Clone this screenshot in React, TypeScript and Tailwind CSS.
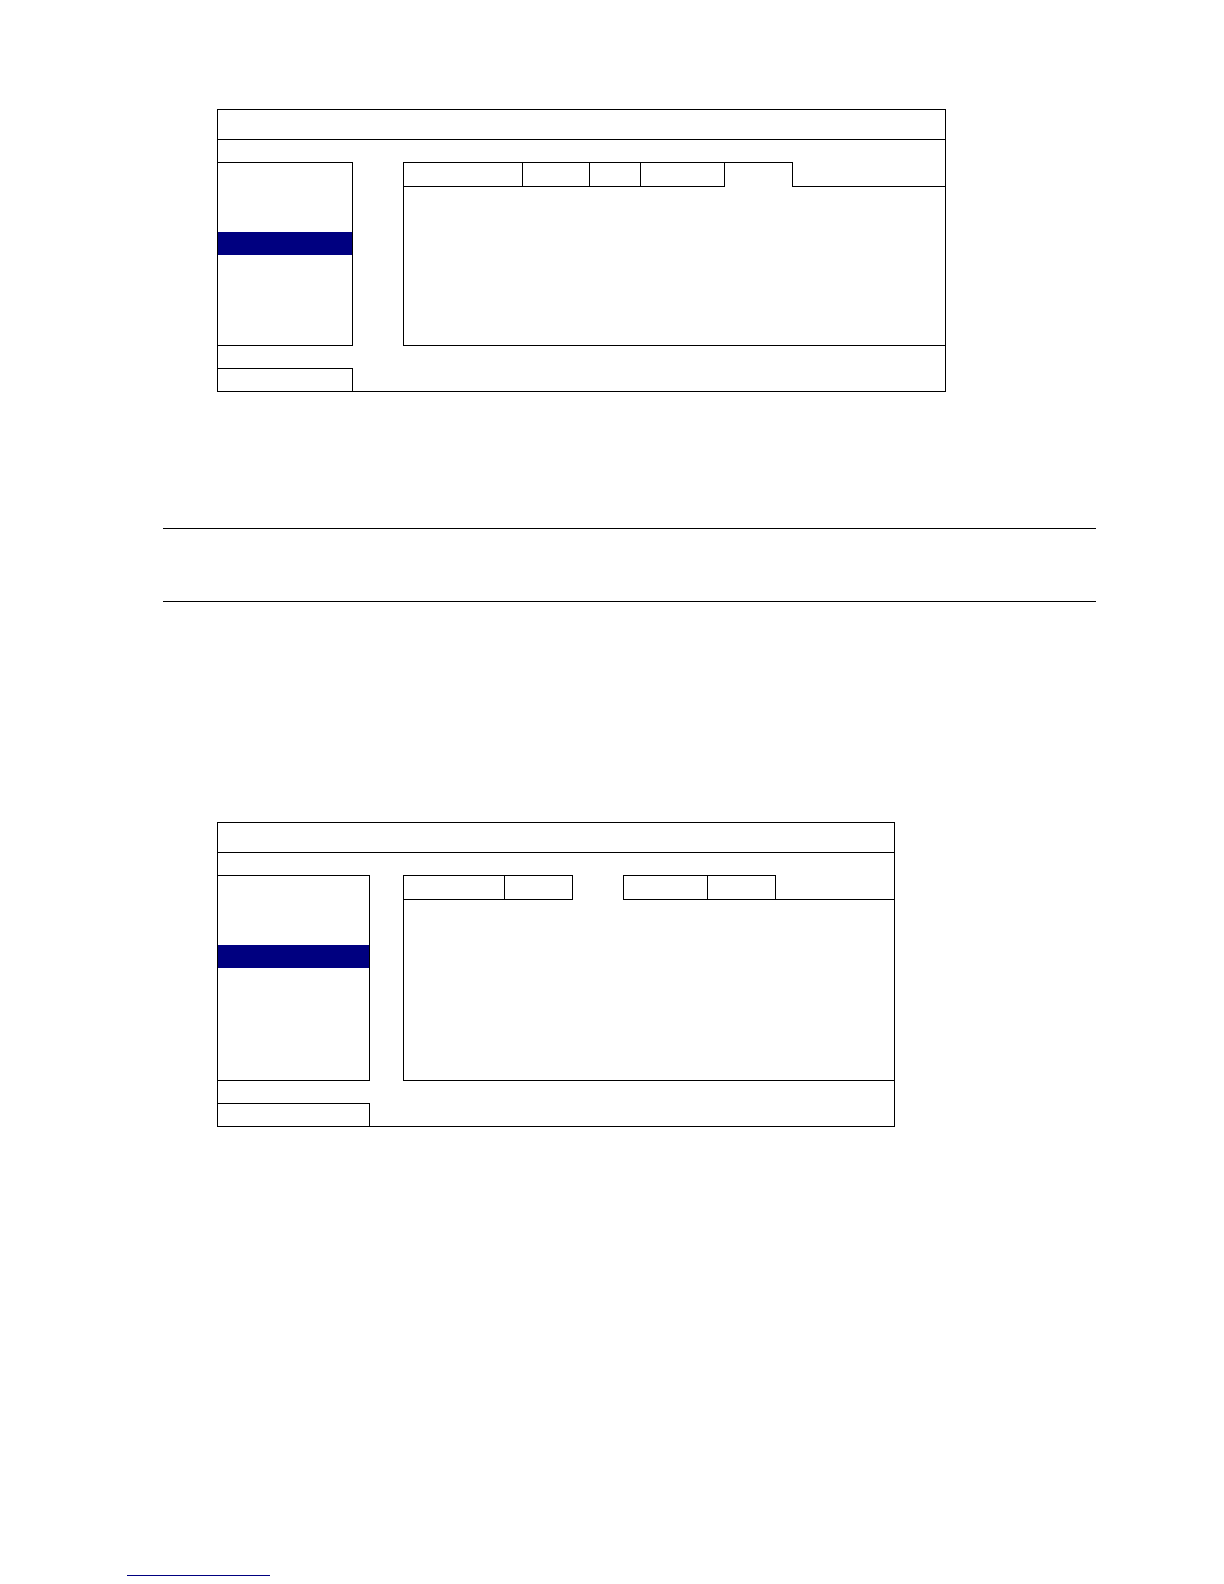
type Tab = { w: string; active?: boolean; bare?: boolean; leftEdge?: boolean };

function MenuScreen({
  width,
  sideW,
  gapW,
  bodyH,
  sideH,
  tabs,
}: {
  width: string;
  sideW: string;
  gapW: string;
  bodyH: string;
  sideH: string;
  tabs: Tab[];
}) {
  return (
    <div className={`ml-[217px] ${width} border border-black bg-white`}>
      {/* title bar */}
      <div className="h-[30px] border-b border-black" />
      <div className="h-[22px]" />
      <div className="flex">
        {/* left menu list */}
        <div className={`${sideW} ${sideH} border-t border-r border-b border-black`}>
          <div className="h-[69px]" />
          <div className="h-[23px] bg-[#000080]" />
        </div>
        <div className={gapW} />
        {/* tabbed page */}
        <div className="flex-1 flex flex-col border-l border-black">
          <div className="flex h-[25px]">
            {tabs.map((t, i) => (
              <div
                key={i}
                className={clsx(
                  t.w,
                  "h-[25px] border-black",
                  t.bare ? "" : "border-t border-r",
                  t.active || t.bare ? "" : "border-b",
                  t.leftEdge ? "border-l" : ""
                )}
              />
            ))}
            <div className="flex-1 border-b border-black" />
          </div>
          <div className={`${bodyH} border-b border-black`} />
        </div>
      </div>
      <div className="h-[22px]" />
      {/* bottom button */}
      <div className={`${sideW} h-[23px] border-t border-r border-black`} />
    </div>
  );
}

function clsx(...c: string[]) {
  return c.filter(Boolean).join(" ");
}

export default function App() {
  return (
    <div className="min-h-[1584px] bg-white pt-[109px] font-['Liberation_Sans',sans-serif]">
      <MenuScreen
        width="w-[729px]"
        sideW="w-[135px]"
        gapW="w-[50px]"
        sideH="h-[184px]"
        bodyH="h-[159px]"
        tabs={[
          { w: "w-[119px]" },
          { w: "w-[67px]" },
          { w: "w-[51px]" },
          { w: "w-[84px]" },
          { w: "w-[68px]", active: true },
        ]}
      />

      <div className="ml-[163px] mt-[136px] w-[933px] border-t border-black" />
      <div className="ml-[163px] mt-[72px] w-[933px] border-t border-black" />

      <div className="mt-[220px]">
        <MenuScreen
          width="w-[678px]"
          sideW="w-[152px]"
          gapW="w-[33px]"
          sideH="h-[206px]"
          bodyH="h-[181px]"
          tabs={[
            { w: "w-[101px]" },
            { w: "w-[68px]" },
            { w: "w-[50px]", bare: true },
            { w: "w-[85px]", leftEdge: true },
            { w: "w-[68px]" },
          ]}
        />
      </div>

      <div className="ml-[127px] mt-[448px] w-[143px] border-t border-[#000080]" />
    </div>
  );
}
